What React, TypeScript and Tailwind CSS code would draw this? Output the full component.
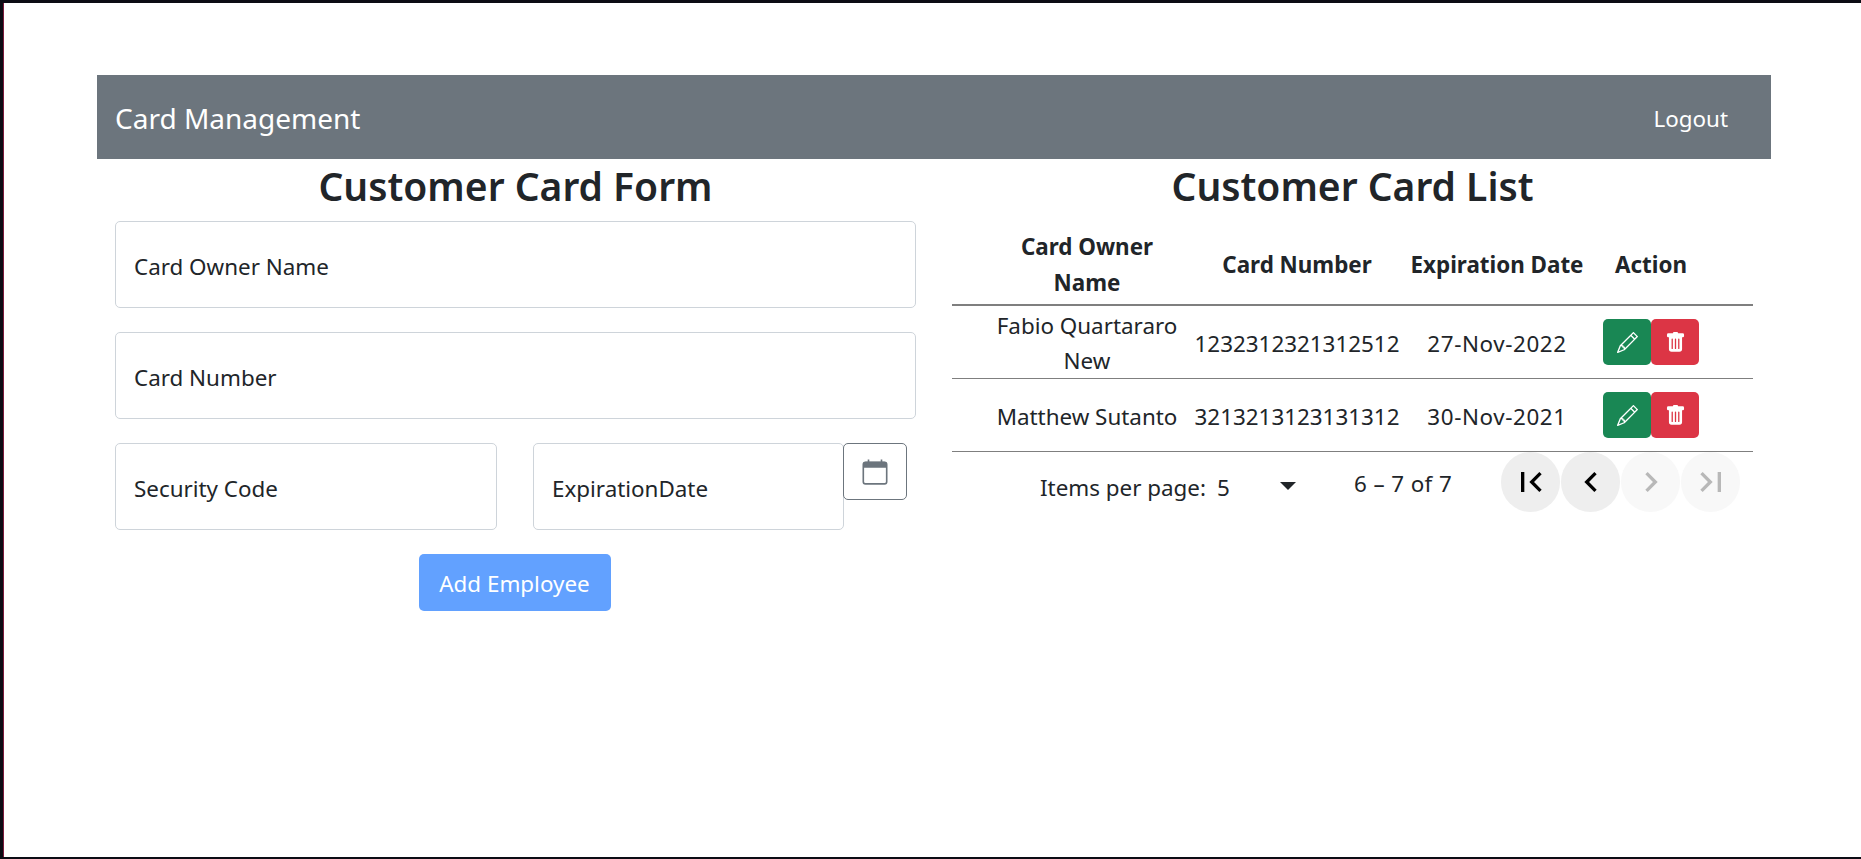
const rows = [
  { name: 'Fabio Quartararo New', number: '1232312321312512', date: '27-Nov-2022' },
  { name: 'Matthew Sutanto', number: '3213213123131312', date: '30-Nov-2021' },
];

function Field({ label, className }: { label: string; className: string }) {
  return (
    <div className={`h-[87px] shrink-0 flex items-center pl-[18px] pt-[5px] border border-[#ced4da] rounded-[5px] text-[#212529] ${className}`}>
      {label}
    </div>
  );
}

function PageButton({ disabled, d }: { disabled?: boolean; d: string }) {
  return (
    <button className={`w-[59px] h-[60px] rounded-full flex items-center justify-center ${disabled ? 'bg-[#f8f8f8]' : 'bg-[#eeeeee]'}`}>
      <svg width="40" height="40" viewBox="0 0 24 24" fill={disabled ? '#b8b8b8' : '#000000'}>
        <path d={d} />
      </svg>
    </button>
  );
}

export default function App() {
  return (
    <div className="h-[859px] overflow-hidden border-t-[3px] border-l-[3px] border-b-[2px] border-[#0c0c14] bg-white text-[22.4px] text-[#212529] font-['Noto_Sans','Open_Sans',sans-serif]">
      <div className="h-full border-l border-[#7a1a3a] pt-[72px] pl-[93px] w-[1768px]">
        {/* Top Bar */}
        <div className="h-[84px] bg-[#6c757d] text-white flex items-center justify-between pl-[18px] pr-[43px]">
          <span className="text-[28px] pt-[2px]">Card Management</span>
          <span className="pt-[3px]">Logout</span>
        </div>

        <div className="flex">
          {/* Form */}
          <div className="w-[837px] px-[18px]">
            <h2 className="text-[39px] leading-[54px] font-semibold text-center">Customer Card Form</h2>
            <div className="mt-[8px] flex flex-col gap-[24px]">
              <Field label="Card Owner Name" className="w-[801px]" />
              <Field label="Card Number" className="w-[801px]" />
              <div className="flex items-start">
                <Field label="Security Code" className="w-[382px]" />
                <Field label="ExpirationDate" className="w-[311px] ml-[36px]" />
                <button className="w-[64px] h-[57px] -ml-[1px] shrink-0 border border-[#6c757d] rounded-[5px] flex items-center justify-center">
                  <svg width="26" height="26" viewBox="0 0 24 24" fill="none">
                    <rect x="1.2" y="3" width="21.6" height="20" rx="2" fill="none" stroke="#6c757d" strokeWidth="1.5" />
                    <path d="M1 5a2.5 2.5 0 0 1 2.5-2.5h17A2.5 2.5 0 0 1 23 5v3H1z" fill="#6c757d" />
                    <path d="M6 .5v2.5M18 .5v2.5" stroke="#6c757d" strokeWidth="1.5" />
                  </svg>
                </button>
              </div>
            </div>
            <div className="flex justify-center mt-[24px] pr-[2px]">
              <button className="w-[192px] h-[57px] pt-[2px] rounded-[5px] bg-[#62a1ff] text-white">Add Employee</button>
            </div>
          </div>

          {/* List */}
          <div className="w-[838px] px-[18px]">
            <h2 className="text-[39px] leading-[54px] font-semibold text-center">Customer Card List</h2>
            <table className="w-[801px] mt-[8px] table-fixed text-center leading-[36px]">
              <colgroup>
                <col className="w-[240px]" />
                <col className="w-[210px]" />
                <col className="w-[190px]" />
                <col />
              </colgroup>
              <thead>
                <tr className="h-[84px] border-b-2 border-[#7f7f7f]">
                  <th className="pl-[30px] pt-[4px] font-bold">Card Owner<br />Name</th>
                  <th className="pt-[4px] font-bold whitespace-nowrap">Card Number</th>
                  <th className="pt-[4px] font-bold whitespace-nowrap">Expiration Date</th>
                  <th className="pl-[11px] pr-[54px] pt-[4px] font-bold">Action</th>
                </tr>
              </thead>
              <tbody className="leading-[35px]">
                {rows.map((r) => (
                  <tr key={r.number} className="h-[73px] border-b border-[#7f7f7f]">
                    <td className="pl-[30px] pt-[2px]">{r.name}</td>
                    <td className="pt-[2px] whitespace-nowrap">{r.number}</td>
                    <td className="pt-[2px] whitespace-nowrap tracking-[0.6px]">{r.date}</td>
                    <td className="pl-[11px]">
                      <div className="flex">
                        <button className="w-[48px] h-[46px] rounded-[5px] bg-[#198754] text-white flex items-center justify-center">
                          <svg width="21" height="21" viewBox="0 0 16 16" fill="currentColor">
                            <path d="M12.146.146a.5.5 0 0 1 .708 0l3 3a.5.5 0 0 1 0 .708l-10 10a.5.5 0 0 1-.168.11l-5 2a.5.5 0 0 1-.65-.65l2-5a.5.5 0 0 1 .11-.168l10-10zM11.207 2.5 13.5 4.793 14.793 3.5 12.5 1.207 11.207 2.5zm1.586 3L10.5 3.207 4 9.707V10h.5a.5.5 0 0 1 .5.5v.5h.5a.5.5 0 0 1 .5.5v.5h.293l6.5-6.5zm-9.761 5.175-.106.106-1.528 3.821 3.821-1.528.106-.106A.5.5 0 0 1 5 12.5V12h-.5a.5.5 0 0 1-.5-.5V11h-.5a.5.5 0 0 1-.468-.325z" />
                          </svg>
                        </button>
                        <button className="w-[48px] h-[46px] rounded-[5px] bg-[#dc3545] text-white flex items-center justify-center">
                          <svg width="21" height="21" viewBox="0 0 16 16" fill="currentColor">
                            <path d="M2.5 1a1 1 0 0 0-1 1v1a1 1 0 0 0 1 1H3v9a2 2 0 0 0 2 2h6a2 2 0 0 0 2-2V4h.5a1 1 0 0 0 1-1V2a1 1 0 0 0-1-1H10a1 1 0 0 0-1-1H7a1 1 0 0 0-1 1H2.5zm3 4a.5.5 0 0 1 .5.5v7a.5.5 0 0 1-1 0v-7a.5.5 0 0 1 .5-.5zM8 5a.5.5 0 0 1 .5.5v7a.5.5 0 0 1-1 0v-7A.5.5 0 0 1 8 5zm3 .5v7a.5.5 0 0 1-1 0v-7a.5.5 0 0 1 1 0z" />
                          </svg>
                        </button>
                      </div>
                    </td>
                  </tr>
                ))}
              </tbody>
            </table>

            {/* Pagination */}
            <div className="flex w-[801px] h-[60px]">
              <span className="ml-[88px] w-[177px] mt-[18px] leading-[36px] whitespace-nowrap">Items per page:</span>
              <span className="w-[63px] mt-[18px] leading-[36px]">5</span>
              <span className="mt-[30px] w-0 h-0 border-x-[8px] border-t-[8px] border-x-transparent border-t-[#212529]"></span>
              <span className="ml-[58px] mt-[14px] leading-[36px] whitespace-nowrap tracking-[0.4px]">6 – 7 of 7</span>
              <div className="ml-auto mr-[13px] flex gap-[1px]">
                <PageButton d="M18.41 16.59L13.82 12l4.59-4.59L17 6l-6 6 6 6zM6 6h2v12H6z" />
                <PageButton d="M15.41 7.41L14 6l-6 6 6 6 1.41-1.41L10.83 12z" />
                <PageButton disabled d="M10 6L8.59 7.41 13.17 12l-4.58 4.59L10 18l6-6z" />
                <PageButton disabled d="M5.59 7.41L10.18 12l-4.59 4.59L7 18l6-6-6-6zM16 6h2v12h-2z" />
              </div>
            </div>
          </div>
        </div>
      </div>
    </div>
  );
}
